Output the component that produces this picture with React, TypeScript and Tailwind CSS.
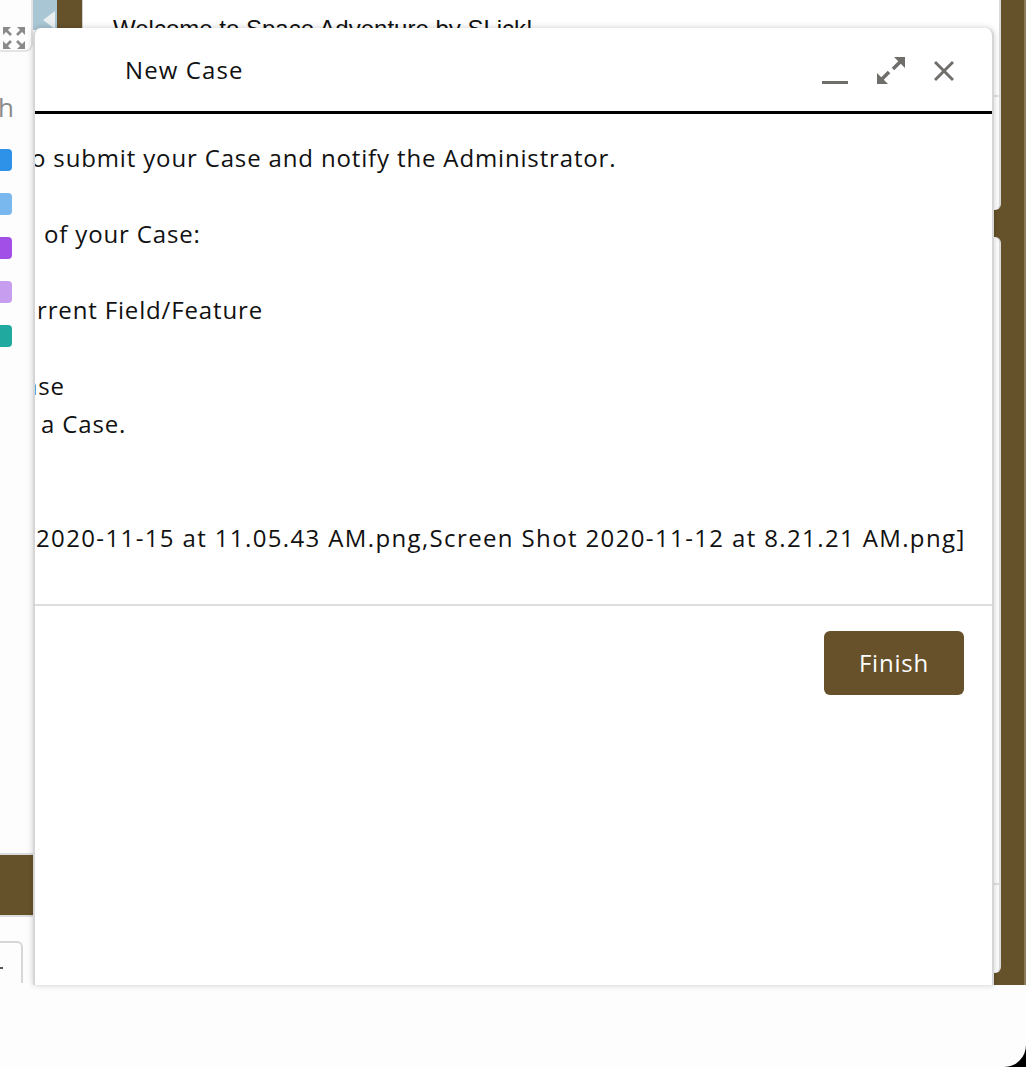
const INK = "#706e6b";

const SWATCHES = ["bg-[#2e92e8]", "bg-[#78b8ee]", "bg-[#a14fe7]", "bg-[#c69def]", "bg-[#1fa99f]"];

function CornerArrows() {
    return (
        <svg width="22" height="22" viewBox="0 0 22 22" fill="#8a8a8a">
            <polygon points="0,0 8,0 0,8" />
            <polygon points="22,0 14,0 22,8" />
            <polygon points="0,22 8,22 0,14" />
            <polygon points="22,22 14,22 22,14" />
            <g stroke="#8a8a8a" strokeWidth="2.6">
                <line x1="3" y1="3" x2="8" y2="8" />
                <line x1="19" y1="3" x2="14" y2="8" />
                <line x1="3" y1="19" x2="8" y2="14" />
                <line x1="19" y1="19" x2="14" y2="14" />
            </g>
        </svg>
    );
}

function LeftRail() {
    return (
        <div className="flex w-[33px] shrink-0 flex-col">
            <div className="h-[52px] rounded-br-[8px] border-r-2 border-b-2 border-[#e4e4e4] pt-[27px] pl-[3px]">
                <CornerArrows />
            </div>
            <div className="mt-[40px] -ml-[2px] h-[30px] text-[26px] leading-[30px] text-[#8a8a8a]">h</div>
            <div className="mt-[27px] flex flex-col gap-[22px]">
                {SWATCHES.map((c) => (
                    <div key={c} className={`h-[22px] w-[12px] rounded-r-[4px] ${c}`} />
                ))}
            </div>
            <div className="mt-[506px] h-[64px] border-y-2 border-[#dcdcdc] bg-[#66522a]" />
            <div className="mt-[24px] h-[42px] w-[23px] rounded-tr-[6px] border-t-2 border-r-2 border-[#d6d6d6]">
                <div className="mt-[24px] h-[2px] w-[3px] bg-[#555]" />
            </div>
        </div>
    );
}

function RightRail() {
    return (
        <div className="flex w-[32px] shrink-0 bg-[#66522a]">
            <div className="flex w-[7px] flex-col">
                <div className="h-[210px] rounded-br-[6px] border-r-2 border-[#d9d9d9] bg-white">
                    <div className="h-[97px] border-b-2 border-[#e2e2e2]" />
                </div>
                <div className="mt-[27px] h-[736px] rounded-r-[6px] border-r-2 border-[#d9d9d9] bg-white">
                    <div className="h-[648px] border-b-2 border-[#e2e2e2]" />
                </div>
            </div>
            <div className="w-[23px]" />
            <div className="w-[2px] bg-[#8c7b58]" />
        </div>
    );
}

function TopStrip() {
    return (
        <div className="flex h-[30px]">
            <div className="flex w-[24px] items-end bg-[#a9c6d4] pl-[10px]">
                <div className="mb-[1px] h-0 w-0 border-y-[9px] border-r-[12px] border-y-transparent border-r-[#e9eef1]" />
            </div>
            <div className="w-[25px] bg-[#66522a]" />
            <div className="w-[1px] bg-[#cfcfcf]" />
            <div className="pl-[30px] pt-[15px] font-['Liberation_Sans',sans-serif] text-[24px] leading-[28px] whitespace-nowrap text-[#111]">
                Welcome to Space Adventure by SLick!
            </div>
        </div>
    );
}

function ModalIcons() {
    return (
        <div className="mt-[3px] flex items-center gap-[29px] pr-[38px]">
            <svg width="26" height="28" viewBox="0 0 26 28" fill={INK}>
                <rect x="0" y="24" width="26" height="3" />
            </svg>
            <svg width="28" height="28" viewBox="0 0 28 28" fill={INK}>
                <polygon points="17,0 28,0 28,11" />
                <polygon points="0,27 0,16 11,27" />
                <g stroke={INK} strokeWidth="3.6">
                    <line x1="23" y1="5" x2="16" y2="12" />
                    <line x1="5" y1="22" x2="12" y2="15" />
                </g>
            </svg>
            <svg width="20" height="28" viewBox="0 0 20 28" stroke={INK} strokeWidth="3">
                <line x1="1" y1="5" x2="19" y2="23" />
                <line x1="19" y1="5" x2="1" y2="23" />
            </svg>
        </div>
    );
}

function CaseModal() {
    const row = "h-[38px] whitespace-nowrap leading-[38px] tracking-[0.85px]";
    return (
        <div className="absolute left-[33px] top-[28px] flex h-[957px] w-[961px] flex-col overflow-hidden rounded-t-[8px] border-x-2 border-[#d6d6d6] bg-white text-[#111] shadow-[0_0_6px_rgba(0,0,0,0.2)]">
            <div className="flex h-[83px] shrink-0 items-center justify-between">
                <div className="pl-[90px] text-[24px] tracking-[1.1px]">New Case</div>
                <ModalIcons />
            </div>
            <div className="h-[3px] shrink-0 bg-black" />
            <div className="h-[490px] shrink-0 overflow-hidden pt-[25px] text-[24px]">
                <div className={`${row} -ml-[4px]`}>o submit your Case and notify the Administrator.</div>
                <div className={row} />
                <div className={`${row} ml-[9px]`}>of your Case:</div>
                <div className={row} />
                <div className={`${row} ml-[2px]`}>rrent Field/Feature</div>
                <div className={row} />
                <div className={`${row} -ml-[11px]`}>ase</div>
                <div className={`${row} ml-[6px]`}>a Case.</div>
                <div className={row} />
                <div className={row} />
                <div className={`${row} ml-[1px] !tracking-[1.37px]`}>
                    2020-11-15 at 11.05.43 AM.png,Screen Shot 2020-11-12 at 8.21.21 AM.png]
                </div>
            </div>
            <div className="flex flex-1 justify-end border-t-2 border-[#dddddd] pt-[25px] pr-[28px]">
                <button className="h-[64px] w-[140px] rounded-[6px] bg-[#66512a] text-[24px] tracking-[0.8px] text-white">
                    Finish
                </button>
            </div>
        </div>
    );
}

export default function App() {
    return (
        <div className="relative h-[1067px] w-[1026px] overflow-hidden bg-black font-['Open_Sans',sans-serif]">
            <div className="flex h-full flex-col rounded-br-[22px] bg-[#fdfdfd]">
                <div className="flex h-[985px] shrink-0">
                    <LeftRail />
                    <div className="flex-1 bg-white">
                        <TopStrip />
                    </div>
                    <RightRail />
                </div>
            </div>
            <CaseModal />
        </div>
    );
}
